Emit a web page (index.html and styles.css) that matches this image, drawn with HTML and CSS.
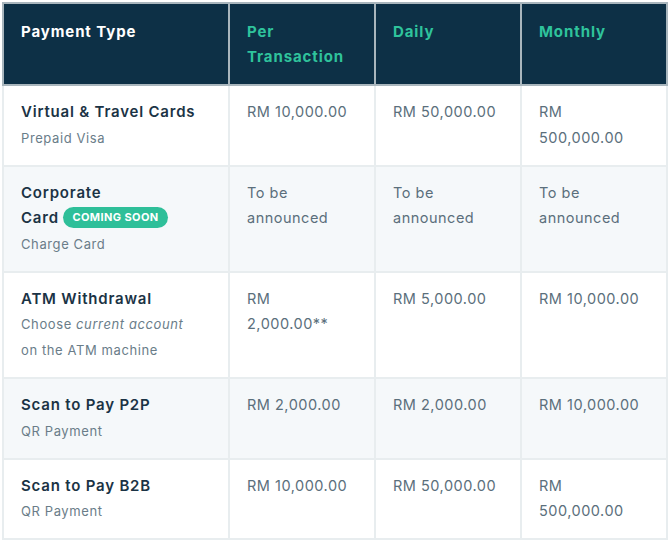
FILE: index.html
```html
<!DOCTYPE html>
<html lang="en">
<head>
    <meta charset="UTF-8">
    <meta name="viewport" content="width=device-width, initial-scale=1.0">
    <title>Payment Limits</title>
    <link rel="stylesheet" href="styles.css">
</head>
<body>

    <table class="limits">
        <colgroup>
            <col class="col-type">
            <col class="col-amount">
            <col class="col-amount">
            <col class="col-amount">
        </colgroup>
        <thead>
            <tr>
                <th class="th-main">Payment Type</th>
                <th>Per Transaction</th>
                <th>Daily</th>
                <th>Monthly</th>
            </tr>
        </thead>
        <tbody>
            <tr>
                <td class="type">
                    <div class="name">Virtual &amp; Travel Cards</div>
                    <div class="sub">Prepaid Visa</div>
                </td>
                <td>RM 10,000.00</td>
                <td>RM 50,000.00</td>
                <td>RM 500,000.00</td>
            </tr>
            <tr class="alt">
                <td class="type">
                    <div class="name">Corporate <span class="keep">Card <span class="badge">COMING SOON</span></span></div>
                    <div class="sub">Charge Card</div>
                </td>
                <td>To be announced</td>
                <td>To be announced</td>
                <td>To be announced</td>
            </tr>
            <tr>
                <td class="type">
                    <div class="name">ATM Withdrawal</div>
                    <div class="sub">Choose <em>current account</em> on the ATM machine</div>
                </td>
                <td>RM 2,000.00**</td>
                <td>RM 5,000.00</td>
                <td>RM 10,000.00</td>
            </tr>
            <tr class="alt">
                <td class="type">
                    <div class="name">Scan to Pay P2P</div>
                    <div class="sub">QR Payment</div>
                </td>
                <td>RM 2,000.00</td>
                <td>RM 2,000.00</td>
                <td>RM 10,000.00</td>
            </tr>
            <tr>
                <td class="type">
                    <div class="name">Scan to Pay B2B</div>
                    <div class="sub">QR Payment</div>
                </td>
                <td>RM 10,000.00</td>
                <td>RM 50,000.00</td>
                <td>RM 500,000.00</td>
            </tr>
        </tbody>
    </table>

</body>
</html>
```

FILE: styles.css
```css
* {
    margin: 0;
    padding: 0;
    box-sizing: border-box;
}

body {
    font-family: Inter, "Noto Sans", sans-serif;
    background-color: #ffffff;
    padding: 2px;
}

.limits {
    width: 666px;
    border-collapse: collapse;
    table-layout: fixed;
    border: 2px solid #e8edef;
}

.col-type {
    width: 226px;
}

.limits th,
.limits td {
    text-align: left;
    vertical-align: top;
    border: 2px solid #e8edef;
}

.limits th {
    background-color: #0d3046;
    color: #2fc39c;
    font-size: 15px;
    font-weight: 700;
    letter-spacing: 0.9px;
    line-height: 25px;
    padding: 15px 17px 15px;
    height: 82px;
    border-color: #a9b6bd;
}

.limits th.th-main {
    color: #ffffff;
}

.limits td {
    font-size: 14.5px;
    letter-spacing: 0.5px;
    line-height: 25.5px;
    color: #5b6f7c;
    padding: 13px 20px 14px 17px;
}

.limits td.type {
    padding-right: 27px;
}

.limits tr.alt td {
    background-color: #f5f8fa;
}

.name {
    font-weight: 600;
    font-size: 15px;
    letter-spacing: 0.8px;
    color: #1b3345;
}

.keep {
    white-space: nowrap;
}

.sub {
    font-size: 13px;
    letter-spacing: 0.6px;
    line-height: 26px;
    color: #6a7d89;
}

.badge {
    display: inline-block;
    background-color: #2ebf99;
    color: #ffffff;
    font-size: 11px;
    font-weight: 700;
    letter-spacing: 0.4px;
    line-height: 21px;
    padding: 0 9px;
    border-radius: 11px;
    vertical-align: 2px;
}
```
